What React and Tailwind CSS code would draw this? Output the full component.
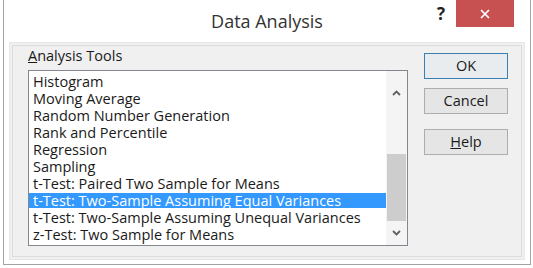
import { X } from 'lucide-react';

const tools = [
  'Histogram',
  'Moving Average',
  'Random Number Generation',
  'Rank and Percentile',
  'Regression',
  'Sampling',
  't-Test: Paired Two Sample for Means',
  't-Test: Two-Sample Assuming Equal Variances',
  't-Test: Two-Sample Assuming Unequal Variances',
  'z-Test: Two Sample for Means',
];

const selected = 7;

function Chevron({ down }) {
  return (
    <svg width="9" height="6" viewBox="0 0 9 6">
      <polyline
        points={down ? '1,1 4.5,4.5 8,1' : '1,5 4.5,1.5 8,5'}
        fill="none"
        stroke="#606060"
        strokeWidth="1.8"
      />
    </svg>
  );
}

function DialogButton({ children, primary }) {
  return (
    <button
      className={
        primary
          ? 'h-[26px] w-[84px] border border-[#3c7fb1] bg-[#e9ecef] text-[14.5px] leading-[18px] text-[#1a1a1a]'
          : 'h-[26px] w-[84px] border border-[#adadad] bg-[#e5e5e5] text-[14.5px] leading-[18px] text-[#1a1a1a]'
      }
    >
      {children}
    </button>
  );
}

export default function App() {
  return (
    <div
      className="h-[268px] w-[533px] bg-white"
      style={{ fontFamily: '"Open Sans", "Noto Sans", sans-serif' }}
    >
      <div className="ml-[3px] flex h-[265px] w-[528px] flex-col border-x border-b border-[#a3a3a3] bg-white">
        {/* title bar */}
        <div className="relative flex h-[42px] items-center justify-center">
          <span className="text-[18px] leading-[24px] text-[#333]">Data Analysis</span>
          <div className="absolute right-[16px] top-0 flex items-start">
            <span className="mr-[11px] mt-[3px] text-[17px] font-bold leading-[22px] text-[#222]">?</span>
            <div className="flex h-[27px] w-[58px] items-center justify-center bg-[#c75050]">
              <X size={14} strokeWidth={3} color="#fff" />
            </div>
          </div>
        </div>

        {/* body */}
        <div className="mx-[5px] mb-[4px] flex-1 border border-[#e6e6e6] bg-[#f0f0f0] p-[2px]">
          <div className="flex h-full border border-[#dcdcdc] pl-[15px] pt-[1px]">
            <div className="flex flex-col">
              <div className="h-[18px] text-[14.5px] leading-[18px] text-[#1a1a1a]">
                <span className="underline">A</span>nalysis Tools
              </div>
              <div className="mt-[5px] flex h-[176px] w-[380px] border border-[#828790] bg-white">
                <div className="flex-1 overflow-hidden pt-[2px]">
                  {tools.map((t, i) => (
                    <div key={t} className="flex h-[17px] items-center">
                      <div
                        className={
                          i === selected
                            ? 'flex h-[15px] w-full items-center bg-[#3399ff] pl-[4px] text-[14.5px] leading-[15px] text-white'
                            : 'flex h-[15px] w-full items-center pl-[4px] text-[14.5px] leading-[15px] text-[#1a1a1a]'
                        }
                      >
                        <span className="whitespace-nowrap">{t}</span>
                      </div>
                    </div>
                  ))}
                </div>
                <div className="flex w-[21px] flex-col bg-[#f4f4f4]">
                  <div className="flex h-[28px] items-end justify-center pb-[3px]">
                    <Chevron />
                  </div>
                  <div className="h-[55px]" />
                  <div className="mx-[1px] h-[67px] bg-[#cdcdcd]" />
                  <div className="flex flex-1 items-center justify-center">
                    <Chevron down />
                  </div>
                </div>
              </div>
            </div>

            <div className="ml-[16px] mt-[6px] flex flex-col">
              <DialogButton primary>OK</DialogButton>
              <div className="h-[9px]" />
              <DialogButton>Cancel</DialogButton>
              <div className="h-[15px]" />
              <DialogButton>
                <span className="underline">H</span>elp
              </DialogButton>
            </div>
          </div>
        </div>
      </div>
    </div>
  );
}
